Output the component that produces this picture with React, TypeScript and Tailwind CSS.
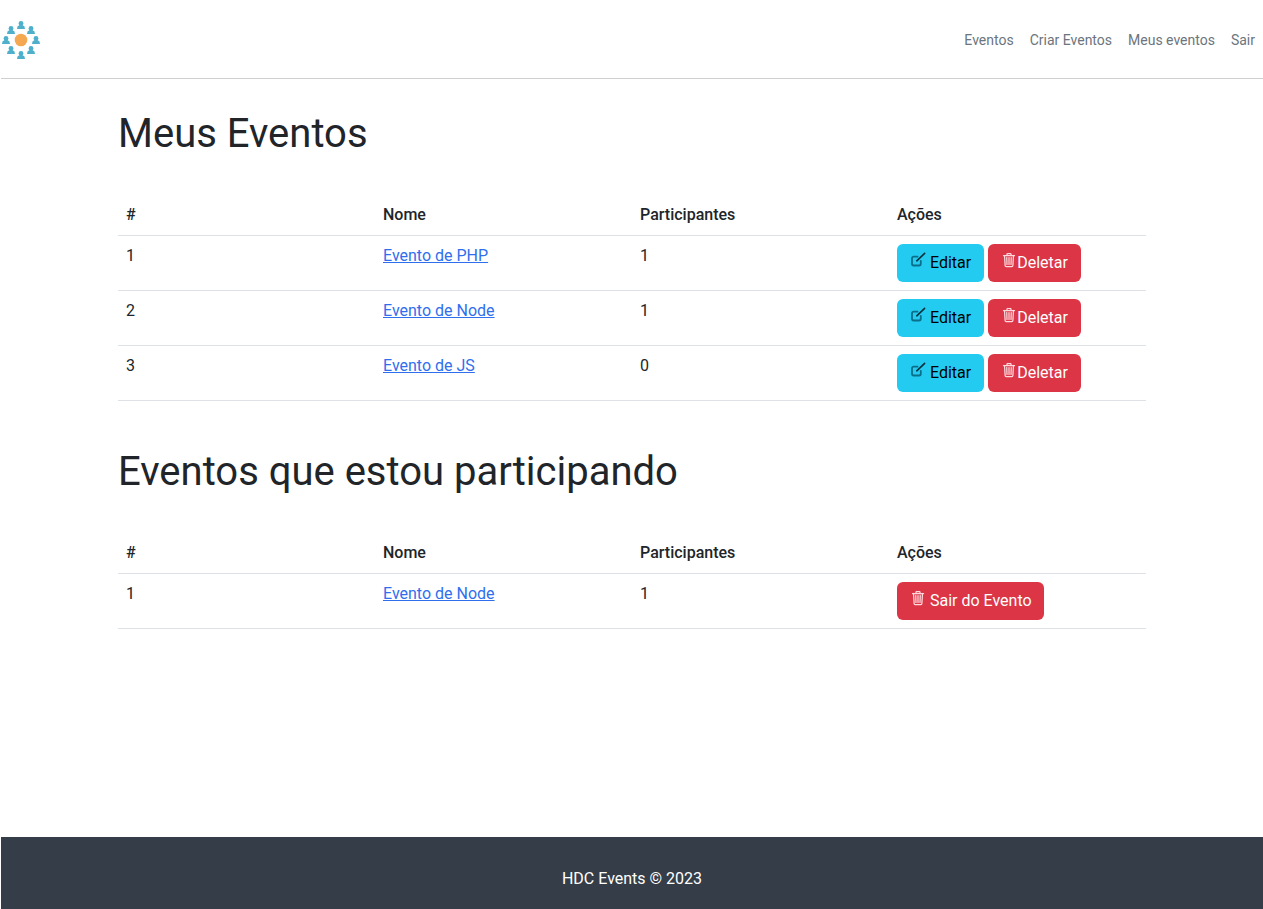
import React from 'react';

type Row = { id: number; name: string; count: number };

const myEvents: Row[] = [
  { id: 1, name: 'Evento de PHP', count: 1 },
  { id: 2, name: 'Evento de Node', count: 1 },
  { id: 3, name: 'Evento de JS', count: 0 },
];

const joined: Row[] = [{ id: 1, name: 'Evento de Node', count: 1 }];

const people = [
  [21, 25],
  [11, 30],
  [31, 30],
  [6, 40],
  [36, 40],
  [11, 50],
  [31, 50],
  [21, 55],
];

const Logo = () => (
  <svg width="42" height="40" viewBox="1 20 42 40" className="block">
    {people.map(([x, y]) => (
      <g key={`${x}-${y}`} fill="#4fb0cc">
        <circle cx={x} cy={y - 1.5} r="2.4" />
        <path d={`M${x - 4} ${y + 4} L${x - 3.4} ${y + 1.2} L${x - 1.2} ${y} H${x + 1.2} L${x + 3.4} ${y + 1.2} L${x + 4} ${y + 4} Z`} />
      </g>
    ))}
    <circle cx="21" cy="40" r="6.3" fill="#f4a852" />
  </svg>
);

const EditIcon = () => (
  <svg viewBox="0 0 16 16" className="inline-block w-4 h-4 align-[0px] text-[#0a6f8a]" fill="none" stroke="currentColor" strokeWidth="1.8" strokeLinecap="round" strokeLinejoin="round">
    <path d="M10.8 9v2.8a1.7 1.7 0 01-1.7 1.7H3.7A1.7 1.7 0 012 11.8V6.4a1.7 1.7 0 011.7-1.7h3.8" />
    <path d="M6.8 8.8L14.6 1.4" stroke="#06303c" strokeWidth="1.6" />
  </svg>
);

const TrashIcon = () => (
  <svg viewBox="0 0 512 512" className="inline-block w-4 h-4 align-[0px] text-[#ffd9de]" fill="none" stroke="currentColor" strokeWidth="40" strokeLinecap="round" strokeLinejoin="round">
    <path d="M112 112l20 320c.95 18.49 14.4 32 32 32h184c17.67 0 30.87-13.51 32-32l20-320" />
    <path d="M80 112h352" />
    <path d="M192 112V72a23.93 23.93 0 0124-24h80a23.93 23.93 0 0124 24v40M256 176v224M184 176l8 224M328 176l-8 224" />
  </svg>
);

const Btn = ({ color, children }: { color: 'edit' | 'del' | 'leave'; children: React.ReactNode }) => (
  <a
    href="#"
    className={
      color === 'edit'
        ? 'inline-block h-[38px] px-[13px] leading-[38px] rounded-md bg-[#22cbef] text-black'
        : color === 'del'
          ? 'inline-block h-[38px] px-[13px] leading-[38px] rounded-md bg-[#dc3545] text-white'
          : 'inline-block h-[38px] pl-[13px] pr-[12px] leading-[38px] rounded-md bg-[#dc3545] text-white'
    }
  >
    {children}
  </a>
);

const Table = ({ rows, joinedTable }: { rows: Row[]; joinedTable?: boolean }) => (
  <table className="w-full table-fixed border-collapse mb-4 text-[#212529]">
    <thead>
      <tr className="border-b border-[#dee2e6]">
        <th className="p-2 text-left font-medium">#</th>
        <th className="p-2 text-left font-medium">Nome</th>
        <th className="p-2 text-left font-medium">Participantes</th>
        <th className="p-2 text-left font-medium">Ações</th>
      </tr>
    </thead>
    <tbody>
      {rows.map((r) => (
        <tr key={r.id} className="border-b border-[#dee2e6] align-top">
          <td className="p-2">{r.id}</td>
          <td className="p-2">
            <a href="#" className="text-[#2f6fed] underline">
              {r.name}
            </a>
          </td>
          <td className="p-2">{r.count}</td>
          <td className="p-2">
            {joinedTable ? (
              <Btn color="leave">
                <TrashIcon /> Sair do Evento
              </Btn>
            ) : (
              <div className="flex gap-1">
                <Btn color="edit">
                  <EditIcon /> Editar
                </Btn>
                <Btn color="del">
                  <TrashIcon />
                  Deletar
                </Btn>
              </div>
            )}
          </td>
        </tr>
      ))}
    </tbody>
  </table>
);

export default function App() {
  return (
    <div className="min-h-[909px] flex flex-col font-['Roboto',sans-serif] text-base text-[#212529]">
      <header className="h-[79px] ml-px border-b border-[#cfcfcf] flex items-center justify-between pt-[2px] pr-2 bg-white">
        <Logo />
        <nav className="flex gap-4 text-sm text-[#6c757d]">
          <a href="#">Eventos</a>
          <a href="#">Criar Eventos</a>
          <a href="#">Meus eventos</a>
          <a href="#">Sair</a>
        </nav>
      </header>
      <main className="flex-1 ml-[118px] w-[1028px]">
        <h1 className="mt-[31px] mb-[37px] text-[40px] leading-[48px] font-normal">Meus Eventos</h1>
        <Table rows={myEvents} />
        <h1 className="mt-[47px] mb-[37px] text-[40px] leading-[48px] font-normal">Eventos que estou participando</h1>
        <Table rows={joined} joinedTable />
      </main>
      <footer className="h-[72px] ml-px pt-[12px] bg-[#353d48] text-white flex items-center justify-center">
        HDC Events © 2023
      </footer>
    </div>
  );
}
